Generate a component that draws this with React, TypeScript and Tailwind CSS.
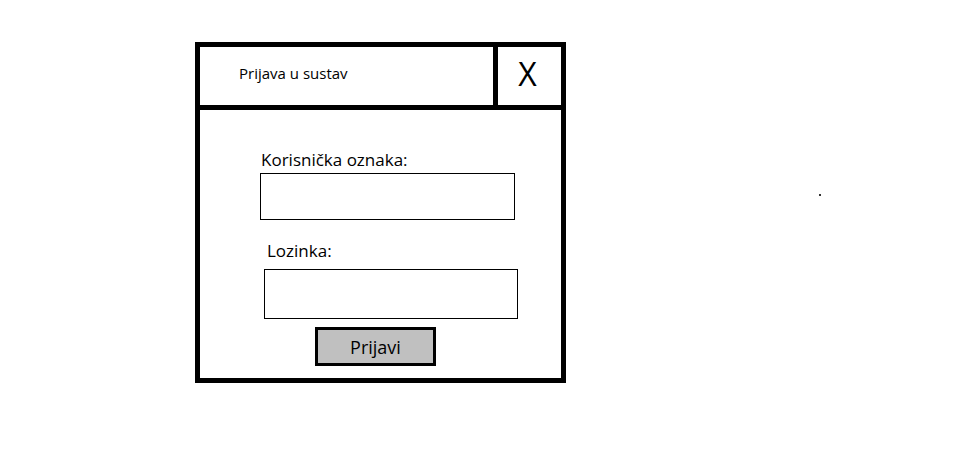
export default function App() {
  return (
    <div className="w-[975px] h-[465px] bg-white flex items-start pl-[195px] pt-[42px] font-['Open_Sans',sans-serif] text-black">
      {/* Prozor prijave */}
      <div className="w-[371px] h-[341px] border-[5px] border-black flex flex-col">
        <div className="h-[63px] flex border-b-[5px] border-black">
          <div className="w-[293px] pl-[39px] pt-[16px] text-[15px] leading-[20px]">Prijava u sustav</div>
          <div className="flex-1 border-l-[5px] border-black flex justify-center pr-[4px] pt-[7px] text-[32px] leading-[40px]">
            X
          </div>
        </div>
        <div className="flex-1 flex flex-col pt-[39px]">
          <label className="ml-[61px] text-[17px] leading-[21px]">Korisnička oznaka:</label>
          <input className="ml-[60px] mt-[3px] w-[255px] h-[47px] border border-black outline-none" />
          <label className="ml-[67px] mt-[20px] text-[17px] leading-[21px]">Lozinka:</label>
          <input type="password" className="ml-[64px] mt-[8px] w-[254px] h-[50px] border border-black outline-none" />
          <button className="ml-[115px] mt-[8px] w-[121px] h-[39px] border-[3px] border-black bg-[#c0c0c0] text-[18px] leading-[20px]">
            Prijavi
          </button>
        </div>
      </div>
      <div className="ml-[253px] mt-[152px] w-[2px] h-[2px] bg-[#333]" />
    </div>
  );
}
